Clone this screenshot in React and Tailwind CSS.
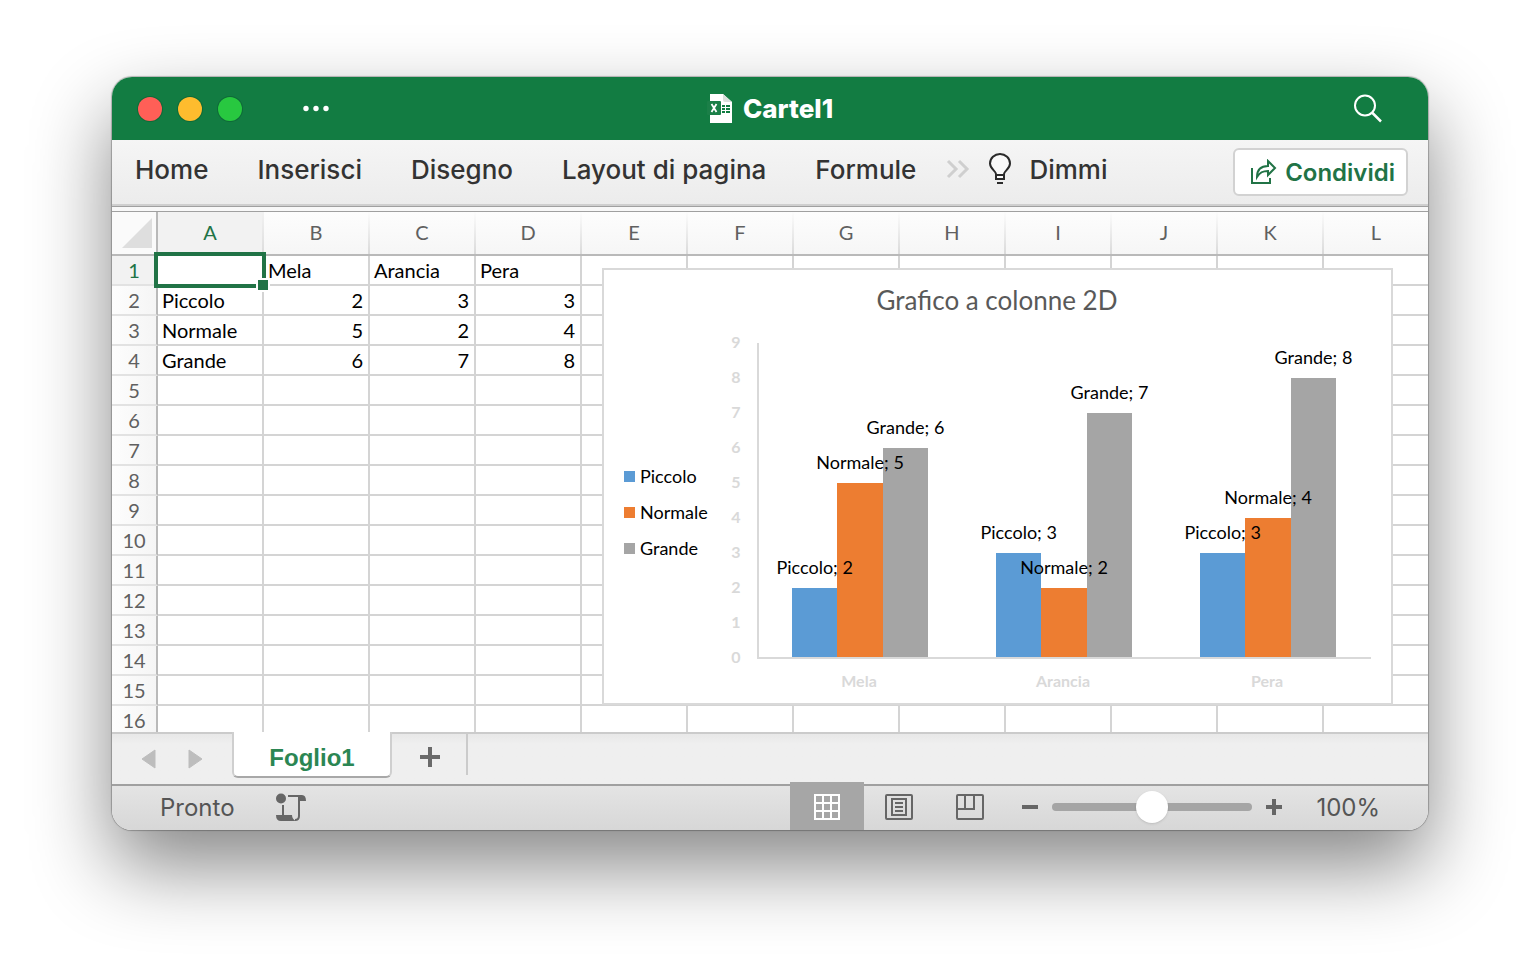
import { useState } from 'react'

const COLUMNS = ['A', 'B', 'C', 'D', 'E', 'F', 'G', 'H', 'I', 'J', 'K', 'L']
const ROWS = Array.from({ length: 16 }, (_, i) => i + 1)
const MENU = ['Home', 'Inserisci', 'Disegno', 'Layout di pagina', 'Formule']

const FRUITS = ['Mela', 'Arancia', 'Pera']
const SERIES = [
  { name: 'Piccolo', color: '#5b9bd5', values: [2, 3, 3] },
  { name: 'Normale', color: '#ed7d31', values: [5, 2, 4] },
  { name: 'Grande',  color: '#a5a5a5', values: [6, 7, 8] },
]

// sheet content, row by row: header line first, then one line per series
const SHEET = [['', ...FRUITS], ...SERIES.map(s => [s.name, ...s.values])]

function TitleBar() {
  return (
    <header className="flex h-[63px] items-center bg-[#127c42] px-[26px]">
      <div className="flex flex-1 items-center gap-4">
        <button aria-label="Chiudi" className="size-6 rounded-full bg-[#ff5f57] ring-1 ring-[#0e6a38]" />
        <button aria-label="Riduci" className="size-6 rounded-full bg-[#febc2e] ring-1 ring-[#0e6a38]" />
        <button aria-label="Ingrandisci" className="size-6 rounded-full bg-[#28c840] ring-1 ring-[#0e6a38]" />
        <button aria-label="Altro" className="ml-11">
          <svg className="h-6 w-7" viewBox="0 0 28 24" fill="#fff">
            <circle cx="4" cy="11.500" r="2.700" />
            <circle cx="14" cy="11.500" r="2.700" />
            <circle cx="24" cy="11.500" r="2.700" />
          </svg>
        </button>
      </div>
      <div className="flex items-center gap-2.5">
        <svg className="h-8 w-[26px]" viewBox="0 0 26 32">
          <path d="M3 1h13l9 8v21H3z" fill="#fff" />
          <path d="M16 1v6q0 2 2 2h7z" fill="#d8e0db" />
          <g fill="#107c41">
            <rect x="15" y="12" width="3" height="2" /><rect x="19" y="12" width="4" height="2" />
            <rect x="15" y="15" width="3" height="2" /><rect x="19" y="15" width="4" height="2" />
            <rect x="15" y="18" width="3" height="2" /><rect x="19" y="18" width="4" height="2" />
          </g>
          <rect x="0" y="8" width="14" height="14" rx="1" fill="#1b7f48" />
          <path d="M4.500 11l5 8M9.500 11l-5 8" stroke="#fff" strokeWidth="1.800" />
        </svg>
        <h1 className="text-[26px] font-extrabold text-white">Cartel1</h1>
      </div>
      <div className="flex flex-1 justify-end">
        <button aria-label="Cerca" className="mr-[18px]">
          <svg className="size-8" viewBox="0 0 32 32" fill="none" stroke="#fff" strokeWidth="2">
            <circle cx="13" cy="12.500" r="10" />
            <path d="M20 19.500l9 9" strokeWidth="2.500" />
          </svg>
        </button>
      </div>
    </header>
  )
}

function Ribbon() {
  return (
    <nav className="flex h-16 items-center bg-linear-to-b from-[#f5f5f5] to-[#ececec] pr-5 pl-[23px] text-[26px] font-medium text-[#333]">
      <div className="flex items-center gap-[49px] pb-1.5">
        {MENU.map(item => <button key={item}>{item}</button>)}
      </div>
      <button aria-label="Altre schede" className="ml-7 pb-1.5">
        <svg className="h-6 w-7" viewBox="0 0 28 24" fill="none" stroke="#cfcfcf" strokeWidth="3">
          <path d="M4 4l8 8-8 8M15 4l8 8-8 8" />
        </svg>
      </button>
      <button className="ml-4 flex items-center gap-[17px] pb-1.5">
        <svg className="h-8 w-6" viewBox="0 0 24 32" fill="none" stroke="#2b2b2b" strokeWidth="2">
          <path d="M8 26v-5c0-3-6-5-6-10.500a10 9.500 0 0 1 20 0c0 5.500-6 7.500-6 10.500v5z" fill="#fafafa" />
          <path d="M8 22h8M9 30h6" />
        </svg>
        Dimmi
      </button>
      <button className="ml-auto flex h-12 items-center gap-2 rounded-md border-2 border-[#d2d2d2] bg-white pt-0.5 pr-[11px] pl-4 text-[24px] font-semibold text-[#217346]">
        <svg className="h-7 w-[26px]" viewBox="0 0 26 28" fill="none" stroke="#217346" strokeWidth="2">
          <path d="M1 9v15h18v-5" />
          <path d="M6 18c0-7 4-11 11-11V2l7 7-7 7v-4c-5 0-8 1-11 6z" />
        </svg>
        Condividi
      </button>
    </nav>
  )
}

function Chart() {
  // plot area: x 156..769, y 75..390, value axis 0..9
  const left = 156
  const bottom = 390
  const unit = 35
  const group = 204
  const bar = 45.4
  const barX = (cat, i) => left + 34 + cat * group + i * bar

  return (
    <svg className="block h-full w-full" viewBox="0 0 791 437" role="img" aria-label="Grafico a colonne 2D">
      <rect x="1" y="1" width="789" height="435" fill="#fff" stroke="#d9d9d9" strokeWidth="2" />
      <text x="395" y="42" fontSize="26" textAnchor="middle" fill="#595959">Grafico a colonne 2D</text>

      {SERIES.map((s, i) => (
        <g key={s.name}>
          <rect x="22" y={203 + i * 36} width="11" height="11" fill={s.color} />
          <text x="38" y={215 + i * 36} fontSize="18">{s.name}</text>
        </g>
      ))}

      <g fontSize="16" fontWeight="700" fill="#d9d9d9" textAnchor="middle">
        {Array.from({ length: 10 }, (_, n) => (
          <text key={n} x="134" y={bottom + 5 - n * unit}>{n}</text>
        ))}
        {FRUITS.map((f, cat) => (
          <text key={f} x={257 + cat * group} y="419">{f}</text>
        ))}
      </g>

      {SERIES.map((s, i) => s.values.map((v, cat) => (
        <rect key={s.name + cat} x={barX(cat, i)} y={bottom - v * unit} width={bar} height={v * unit} fill={s.color} shapeRendering="crispEdges" />
      )))}
      <path d="M156 75v315h613" fill="none" stroke="#d9d9d9" strokeWidth="2" />

      {SERIES.map((s, i) => s.values.map((v, cat) => (
        <text key={s.name + cat} x={barX(cat, i) + bar / 2} y={bottom - v * unit - 14} fontSize="18" textAnchor="middle">
          {s.name}; {v}
        </text>
      )))}
    </svg>
  )
}

function Sheet() {
  return (
    <main className="relative h-[520px] overflow-hidden bg-white font-['Lato',sans-serif] text-[20px] leading-7 text-black">
      <table className="w-full table-fixed border-separate border-spacing-0">
        <colgroup>
          <col className="w-[46px]" />
          {COLUMNS.map(c => <col key={c} className="w-[106px]" />)}
        </colgroup>
        <thead>
          <tr className="h-11">
            <th aria-label="Seleziona tutto" className="border-r-2 border-b-2 border-[#b9b9b9] bg-[#fafafa] p-0">
              <svg className="ml-2 h-8 w-8" viewBox="0 0 32 32"><path d="M32 1v30H2z" fill="#dedede" /></svg>
            </th>
            {COLUMNS.map(c => (
              <th key={c} className={`border-b-2 border-[#b9b9b9] bg-size-[2px_100%,100%_100%] bg-right bg-no-repeat p-0 pr-0.5 pb-0.5 font-normal ${
                c === 'A' ? 'bg-[linear-gradient(#f2f2f2,#dcdcdc),linear-gradient(#f2f2f2,#f2f2f2)] text-[#217346]'
                          : 'bg-[linear-gradient(#fcfcfc,#dadada),linear-gradient(#fdfdfd,#f6f6f6)] text-[#606060]'
              }`}>{c}</th>
            ))}
          </tr>
        </thead>
        <tbody>
          {ROWS.map(r => (
            <tr key={r} className="h-[30px]">
              <th className={`border-r-2 border-b-2 border-r-[#b9b9b9] border-b-[#e2e2e2] p-0 font-normal ${
                r === 1 ? 'bg-[#f2f2f2] text-[#217346]' : 'bg-linear-to-r from-[#fdfdfd] to-[#f5f5f5] text-[#606060]'
              }`}>{r}</th>
              {COLUMNS.map((c, i) => {
                const value = SHEET[r - 1]?.[i] ?? ''
                return (
                  <td key={c} className={`relative border-r-2 border-b-2 border-[#d4d4d4] p-0 ${typeof value === 'number' ? 'pr-[5px] text-right' : 'pl-1 text-left'}`}>
                    {value}
                    {/* active cell frame and fill handle */}
                    {c === 'A' && r === 1 && (
                      <div className="absolute -inset-1 z-10 border-4 border-[#217346]">
                        <span className="absolute -right-2 -bottom-2 size-3.5 border-2 border-white bg-[#217346]" />
                      </div>
                    )}
                  </td>
                )
              })}
            </tr>
          ))}
        </tbody>
      </table>
      <div className="absolute top-14 left-[490px] h-[437px] w-[791px]">
        <Chart />
      </div>
    </main>
  )
}

function SheetTabs() {
  return (
    <div className="flex h-[52px] border-t-2 border-[#cbcbcb] bg-linear-to-b from-[#e8e8e8] to-[#efefef] to-20%">
      <div className="flex w-[120px] items-center gap-7 pl-7">
        <button aria-label="Foglio precedente">
          <svg className="h-6 w-[18px]" viewBox="0 0 18 24"><path d="M15 3v18L2 12z" fill="#bdbdbd" stroke="#bdbdbd" strokeLinejoin="round" /></svg>
        </button>
        <button aria-label="Foglio successivo">
          <svg className="h-6 w-[18px]" viewBox="0 0 18 24"><path d="M3 3v18l13-9z" fill="#bdbdbd" stroke="#bdbdbd" strokeLinejoin="round" /></svg>
        </button>
      </div>
      <button className="relative -mt-0.5 h-[46px] w-40 rounded-b-md border-x-2 border-b-2 border-x-[#cfcfcf] border-b-[#a8a8a8] bg-white pt-2 font-['Liberation_Sans',sans-serif] text-[24px] leading-9 font-bold text-[#2b8653]">
        Foglio1
      </button>
      <button aria-label="Nuovo foglio" className="flex h-[41px] w-[76px] items-center justify-center border-r-2 border-[#cbcbcb] pt-1 pl-0.5">
        <svg className="size-5" viewBox="0 0 20 20" stroke="#6a6a6a" strokeWidth="4"><path d="M10 0v20M0 10h20" /></svg>
      </button>
    </div>
  )
}

function StatusBar() {
  const [zoom, setZoom] = useState(100)

  return (
    <footer className="flex h-[46px] items-center border-t-2 border-[#a0a0a0] bg-linear-to-b from-[#e4e4e4] to-[#d7d7d7] pr-12 pl-12 text-[24px] text-[#555]">
      <span>Pronto</span>
      <button aria-label="Registra macro" className="ml-10">
        <svg className="h-8 w-8" viewBox="0 0 32 32" fill="none" stroke="#666" strokeWidth="2">
          <circle cx="6" cy="6.500" r="5" fill="#666" stroke="none" />
          <path d="M13 4h13M8 13v11" />
          <path d="M24 5v19q0 4-4 4" />
          <path d="M22 3h5q4 0 4 6h-6q0-4-3-5zM1 23h16q0 4 4 6H6q-5 0-5-6z" fill="#666" stroke="none" />
        </svg>
      </button>
      <div className="-mt-1 ml-auto flex h-12 items-center">
        <button aria-label="Normale" className="flex h-12 w-[74px] items-center justify-center bg-[#a6a6a6] pt-0.5">
          <svg className="size-7" viewBox="0 0 28 28" fill="none" stroke="#fff" strokeWidth="2">
            <path d="M2 2h24v24H2zM10 2v24M18 2v24M2 10h24M2 18h24" />
          </svg>
        </button>
        <button aria-label="Layout di pagina" className="ml-5 pt-0.5">
          <svg className="h-7 w-[30px]" viewBox="0 0 30 28" fill="none" stroke="#666" strokeWidth="2">
            <rect x="2" y="2" width="26" height="24" rx="1" />
            <path d="M8 6h14v16H8zM11 10h8M11 14h8M11 18h8" />
          </svg>
        </button>
        <button aria-label="Anteprima interruzioni di pagina" className="ml-[41px] pt-0.5">
          <svg className="h-7 w-[30px]" viewBox="0 0 30 28" fill="none" stroke="#666" strokeWidth="2">
            <rect x="2" y="2" width="26" height="24" rx="1" />
            <path d="M2 16h17V2M10 2v14" />
          </svg>
        </button>
        <button aria-label="Riduci zoom" className="ml-[37px] pt-0.5">
          <svg className="size-4" viewBox="0 0 16 16" stroke="#666" strokeWidth="4" strokeLinejoin="round"><path d="M0 8h16" /></svg>
        </button>
        <input
          type="range" min="0" max="200" value={zoom} aria-label="Zoom"
          onChange={e => setZoom(Number(e.target.value))}
          className="mx-3.5 mt-0.5 h-2 w-[200px] appearance-none rounded-full bg-[#a5a5a5] [&::-webkit-slider-thumb]:size-8 [&::-webkit-slider-thumb]:appearance-none [&::-webkit-slider-thumb]:rounded-full [&::-webkit-slider-thumb]:bg-white [&::-webkit-slider-thumb]:shadow"
        />
        <button aria-label="Aumenta zoom" className="pt-0.5">
          <svg className="size-4" viewBox="0 0 16 16" stroke="#666" strokeWidth="4"><path d="M0 8h16M8 0v16" /></svg>
        </button>
        <output className="ml-[34px] pt-1">{zoom}%</output>
      </div>
    </footer>
  )
}

export default function App() {
  return (
    <div className="min-h-screen bg-white px-28 pt-[77px] pb-[148px] font-['Inter',sans-serif]">
      <div className="overflow-hidden rounded-[20px] shadow-[0_0_1px_1px_rgba(0,0,0,0.25),0_36px_80px_rgba(0,0,0,0.48)]">
        <TitleBar />
        <Ribbon />
        <div className="h-2 border-t-2 border-b border-t-[#cfcfcf] border-b-[#a0a0a0] bg-[#f8f8f8]">
          <div className="h-px bg-[#a0a0a0]" />
        </div>
        <Sheet />
        <SheetTabs />
        <StatusBar />
      </div>
    </div>
  )
}
